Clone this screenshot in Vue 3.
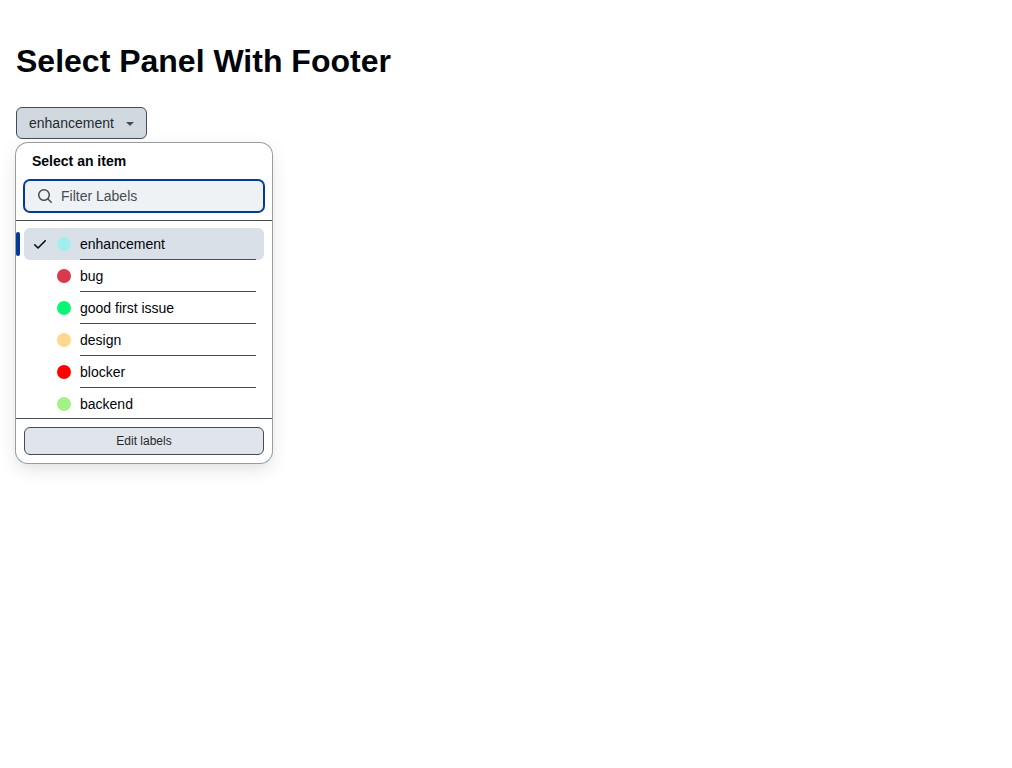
<script setup>
import { computed, onMounted, ref } from 'vue'

const labels = [
  { name: 'enhancement', color: '#a2eeef' },
  { name: 'bug', color: '#d73a4a' },
  { name: 'good first issue', color: '#0cf478' },
  { name: 'design', color: '#ffd78e' },
  { name: 'blocker', color: '#ff0000' },
  { name: 'backend', color: '#a4f287' },
]

const selected = ref('enhancement')
const open = ref(true)
const query = ref('')
const filterInput = ref(null)

const visibleLabels = computed(() =>
  labels.filter((label) => label.name.includes(query.value.trim().toLowerCase())),
)

onMounted(() => filterInput.value.focus())
</script>

<template>
  <main class="page">
    <h1 class="heading">Select Panel With Footer</h1>
    <div class="anchor">
      <button class="trigger" type="button" aria-haspopup="true" :aria-expanded="open" @click="open = !open">
        <span>{{ selected }}</span>
        <svg class="caret" width="16" height="16" viewBox="0 0 16 16" aria-hidden="true">
          <path d="m4.427 7.427 3.396 3.396a.25.25 0 0 0 .354 0l3.396-3.396A.25.25 0 0 0 11.396 7H4.604a.25.25 0 0 0-.177.427Z" />
        </svg>
      </button>
      <section v-show="open" class="panel" role="dialog" aria-labelledby="panel-title">
        <header class="panel-header">
          <h2 id="panel-title" class="panel-title">Select an item</h2>
          <label class="filter">
            <svg width="16" height="16" viewBox="0 0 16 16" aria-hidden="true">
              <path d="M10.68 11.74a6 6 0 0 1-7.922-8.982 6 6 0 0 1 8.982 7.922l3.04 3.04a.749.749 0 0 1-.326 1.275.749.749 0 0 1-.734-.215ZM11.5 7a4.499 4.499 0 1 0-8.997 0A4.499 4.499 0 0 0 11.5 7Z" />
            </svg>
            <input ref="filterInput" v-model="query" type="text" placeholder="Filter Labels" aria-label="Filter Labels" />
          </label>
        </header>
        <ul class="list">
          <li v-for="label in visibleLabels" :key="label.name" class="item">
            <button
              class="option"
              :class="{ active: label.name === selected }"
              type="button"
              :aria-pressed="label.name === selected"
              @click="selected = label.name"
            >
              <span class="mark">
                <svg v-if="label.name === selected" width="16" height="16" viewBox="0 0 16 16" aria-hidden="true">
                  <path d="M13.78 4.22a.75.75 0 0 1 0 1.06l-7.25 7.25a.75.75 0 0 1-1.06 0L2.22 9.28a.751.751 0 0 1 .018-1.042.751.751 0 0 1 1.042-.018L6 10.94l6.72-6.72a.75.75 0 0 1 1.06 0Z" />
                </svg>
              </span>
              <span class="dot" :style="{ backgroundColor: label.color }"></span>
              <span class="name">{{ label.name }}</span>
            </button>
          </li>
        </ul>
        <footer class="panel-footer">
          <button class="edit" type="button">Edit labels</button>
        </footer>
      </section>
    </div>
  </main>
</template>

<style>
body {
  background: #ffffff;
}
</style>

<style scoped>
.page {
  box-sizing: border-box;
  min-height: 100vh;
  padding: 16px;
  color: #010409;
  font-family: "Liberation Sans", Arial, sans-serif;
  font-size: 14px;
  line-height: 20px;
}

.page *,
.page *::before,
.page *::after {
  box-sizing: border-box;
}

button,
input {
  font: inherit;
  color: inherit;
}

button {
  cursor: pointer;
}

svg {
  display: block;
  flex: none;
  fill: currentColor;
}

.heading {
  margin: 21px 0 22px;
  font-size: 32px;
  line-height: 48px;
  font-weight: 700;
}

.anchor {
  position: relative;
}

.trigger {
  display: flex;
  align-items: center;
  gap: 8px;
  height: 32px;
  padding: 0 8px 0 12px;
  border: 1px solid #454c54;
  border-radius: 6px;
  background: #d1d9e0;
  color: #25292e;
}

.caret {
  color: #454c54;
}

.panel {
  position: absolute;
  top: 100%;
  left: 0;
  display: flex;
  flex-direction: column;
  width: 256px;
  height: 320px;
  margin-top: 4px;
  overflow: hidden;
  border-radius: 12px;
  background: #ffffff;
  box-shadow: 0 0 0 1px #959da3, 0 6px 12px -3px #25292e0a, 0 6px 18px 0 #25292e1f;
}

.panel-header {
  flex: none;
  padding: 8px;
  border-bottom: 1px solid #454c54;
}

.panel-title {
  margin: 0 8px 9px;
  font-size: 14px;
  line-height: 20px;
  font-weight: 700;
}

.filter {
  display: flex;
  align-items: center;
  gap: 8px;
  height: 32px;
  padding: 0 12px;
  border: 1px solid #454c54;
  border-radius: 6px;
  background: #eff2f5;
  color: #454c54;
}

.filter:focus-within {
  border-color: #023b95;
  box-shadow: 0 0 0 1px #023b95;
}

.filter input {
  flex: 1;
  min-width: 0;
  padding: 0;
  border: 0;
  outline: 0;
  background: none;
  color: #010409;
  caret-color: transparent;
}

.filter input::placeholder {
  color: #454c54;
  opacity: 1;
}

.list {
  flex: 1;
  min-height: 0;
  margin: 0;
  padding: 7px 8px 8px;
  overflow-y: auto;
  scrollbar-width: none;
  list-style: none;
}

.option {
  position: relative;
  display: flex;
  align-items: center;
  gap: 8px;
  width: 100%;
  height: 32px;
  padding: 0 8px;
  border: 0;
  border-radius: 6px;
  background: none;
  text-align: left;
}

.option.active {
  background: #dae0e7;
}

.option.active::before {
  content: "";
  position: absolute;
  top: 4px;
  left: -8px;
  width: 4px;
  height: 24px;
  border-radius: 2px;
  background: #023b95;
}

.mark {
  flex: none;
  width: 16px;
}

.dot {
  flex: none;
  width: 14px;
  height: 14px;
  margin: 0 1px;
  border-radius: 50%;
}

.name {
  flex: 1;
  align-self: stretch;
  border-bottom: 1px solid #454c54;
  line-height: 32px;
}

.item:last-child .name {
  border-bottom: 0;
}

.panel-footer {
  flex: none;
  padding: 8px;
  border-top: 1px solid #454c54;
}

.edit {
  display: block;
  width: 100%;
  height: 28px;
  padding: 0 8px;
  border: 1px solid #454c54;
  border-radius: 6px;
  background: #e0e4eb;
  color: #25292e;
  font-size: 12px;
}
</style>
